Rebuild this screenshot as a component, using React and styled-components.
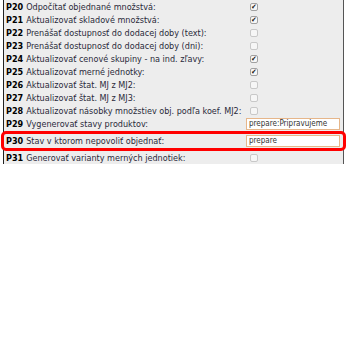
import styled, { createGlobalStyle } from "styled-components";

const GlobalStyle = createGlobalStyle`
  body {
    margin: 0;
    background: #ffffff;
    font-family: "DejaVu Sans Condensed", "DejaVu Sans", sans-serif;
  }
`;

const Panel = styled.div`
  width: 339px;
  margin-left: 3px;
  padding-top: 0;
  padding-bottom: 0;
  background: #ededed;
  border-left: 1px solid #222;
  border-right: 1px solid #555;
`;

const Row = styled.div`
  display: flex;
  align-items: center;
  height: ${(p) => p.$height || 13}px;
  padding-left: 2px;
  border-radius: 2px;
  outline: ${(p) => (p.$marked ? "3px solid #ff0000" : "none")};
  outline-offset: ${(p) => (p.$marked ? "0" : "0")};
  margin-top: ${(p) => (p.$marked ? "3px" : "0")};
  margin-bottom: ${(p) => (p.$marked ? "3px" : "0")};
`;

const Label = styled.div`
  width: 240px;
  font-size: 9px;
  color: #2a2a3a;
  white-space: nowrap;

  b {
    color: #000;
    font-weight: bold;
    margin-right: 3px;
  }
`;

const Check = styled.span`
  display: inline-block;
  width: 6px;
  height: 6px;
  margin-left: 4px;
  border: 1px solid ${(p) => (p.$on ? "#a0a0a0" : "#c8c8c8")};
  border-radius: 2px;
  background: #f6f6f6;
  font-size: 7px;
  line-height: 6px;
  text-align: center;
  color: #111;
  overflow: hidden;
`;

const TextBox = styled.div`
  width: 90px;
  height: 10px;
  border: 1px solid #e6b68a;
  background: #fff;
  font-size: 8px;
  line-height: 10px;
  padding-left: 2px;
  color: #333;
  white-space: nowrap;
  overflow: hidden;
`;

const rows = [
  { id: "P20", text: "Odpočítať objednané množstvá:", check: true },
  { id: "P21", text: "Aktualizovať skladové množstvá:", check: true },
  { id: "P22", text: "Prenášať dostupnosť do dodacej doby (text):", check: false },
  { id: "P23", text: "Prenášať dostupnosť do dodacej doby (dni):", check: false },
  { id: "P24", text: "Aktualizovať cenové skupiny - na ind. zľavy:", check: true },
  { id: "P25", text: "Aktualizovať merné jednotky:", check: true },
  { id: "P26", text: "Aktualizovať štat. MJ z MJ2:", check: false },
  { id: "P27", text: "Aktualizovať štat. MJ z MJ3:", check: false },
  { id: "P28", text: "Aktualizovať násobky množstiev obj. podľa koef. MJ2:", check: false },
  { id: "P29", text: "Vygenerovať stavy produktov:", value: "prepare:Pripravujeme" },
  { id: "P30", text: "Stav v ktorom nepovoliť objednať:", value: "prepare", marked: true },
  { id: "P31", text: "Generovať varianty merných jednotiek:", check: false },
];

export default function App() {
  return (
    <>
      <GlobalStyle />
      <Panel>
        {rows.map((r) => (
          <Row key={r.id} $marked={r.marked} $height={r.value ? 14 : 13}>
            <Label>
              <b>{r.id}</b>
              {r.text}
            </Label>
            {r.value !== undefined ? (
              <TextBox>{r.value}</TextBox>
            ) : (
              <Check $on={r.check}>{r.check ? "✔" : ""}</Check>
            )}
          </Row>
        ))}
      </Panel>
    </>
  );
}
